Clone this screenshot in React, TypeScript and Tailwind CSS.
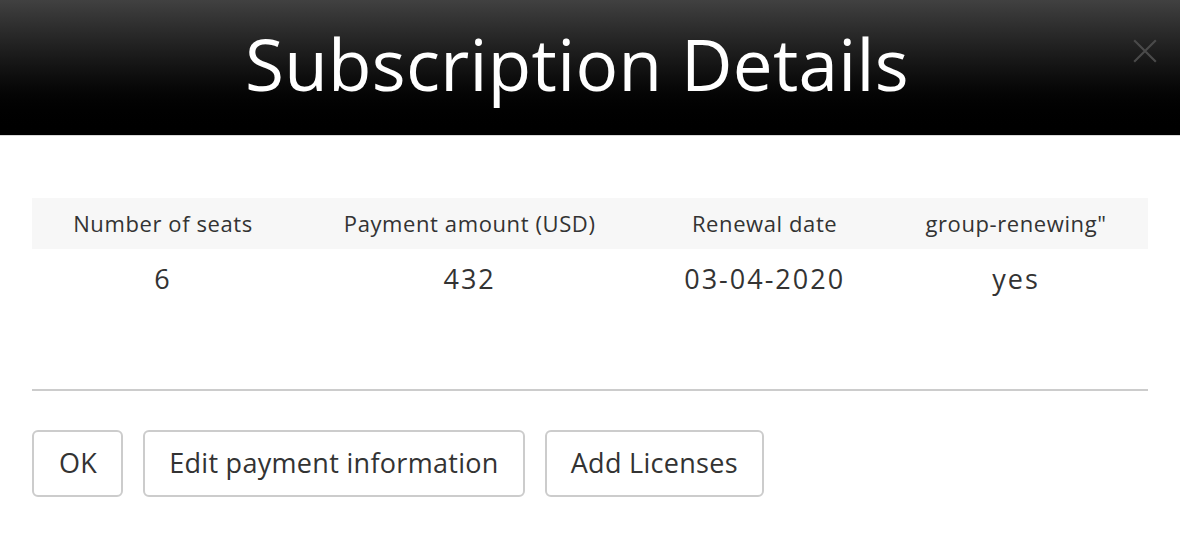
export default function App() {
  const headers = ['Number of seats', 'Payment amount (USD)', 'Renewal date', 'group-renewing"'];
  const values = ['6', '432', '03-04-2020', 'yes'];

  return (
    <div className="w-[1180px] h-[534px] bg-white overflow-hidden" style={{ fontFamily: '"Open Sans", "Noto Sans", sans-serif' }}>
      <header className="relative h-[136px] flex items-center justify-center pr-[26px] bg-gradient-to-b from-[#414141] to-[#000000] border-b border-[#d9d9d9]">
        <h1 className="text-white text-[71px] font-normal leading-none pb-2 tracking-[0.3px]">Subscription Details</h1>
        <button className="absolute right-[22px] top-[38px] w-[26px] h-[26px] text-[#4a4a4a]">
          <svg viewBox="0 0 24 24" className="w-full h-full" fill="none" stroke="currentColor" strokeWidth={2}>
            <path d="M2 2 L22 22 M22 2 L2 22" />
          </svg>
        </button>
      </header>

      <div className="px-8 pt-[62px]">
        <table className="w-full text-center text-[#333]">
          <thead>
            <tr className="bg-[#f7f7f7] h-[51px]">
              {headers.map((h) => (
                <th key={h} className="font-normal text-[22px] tracking-[0.6px] px-4">{h}</th>
              ))}
            </tr>
          </thead>
          <tbody>
            <tr className="h-[60px]">
              {values.map((v, i) => (
                <td key={i} className="text-[27px] tracking-[2px] px-4">{v}</td>
              ))}
            </tr>
          </tbody>
        </table>

        <div className="mt-[80px] border-t-2 border-[#cccccc]" />

        <div className="flex gap-5 mt-[39px]">
          <button className="h-[67px] pl-[25px] pr-[24px] border-2 border-[#cccccc] rounded-md text-[27px] tracking-[0.3px] text-[#333]">OK</button>
          <button className="h-[67px] px-[24px] border-2 border-[#cccccc] rounded-md text-[27px] tracking-[0.3px] text-[#333]">Edit payment information</button>
          <button className="h-[67px] px-[24px] border-2 border-[#cccccc] rounded-md text-[27px] tracking-[0.3px] text-[#333]">Add Licenses</button>
        </div>
      </div>
    </div>
  );
}
